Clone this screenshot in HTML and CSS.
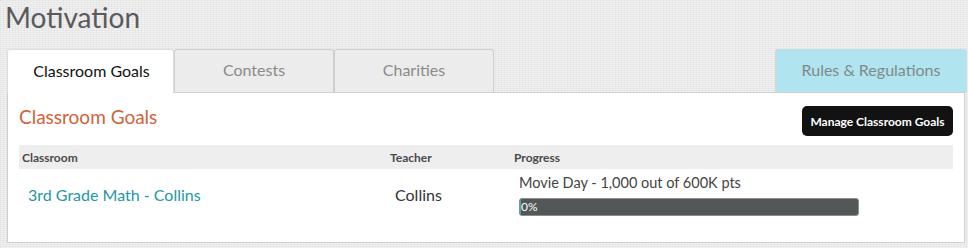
FILE: index.html
```html
<!DOCTYPE html>
<html>
<head>
<meta charset="utf-8">
<link rel="stylesheet" href="styles.css">
</head>
<body>
<div class="page">
  <h1 class="title">Motivation</h1>
  <div class="tabs">
    <div class="tab active">Classroom Goals</div>
    <div class="tab">Contests</div>
    <div class="tab">Charities</div>
    <div class="spacer"></div>
    <div class="tab rules">Rules &amp; Regulations</div>
  </div>
  <div class="panel">
    <div class="panel-head">
      <h2 class="panel-title">Classroom Goals</h2>
      <button class="btn">Manage Classroom Goals</button>
    </div>
    <div class="table">
      <div class="thead">
        <div class="c1">Classroom</div>
        <div class="c2">Teacher</div>
        <div class="c3">Progress</div>
      </div>
      <div class="row">
        <div class="c1 link">3rd Grade Math - Collins</div>
        <div class="c2 teacher">Collins</div>
        <div class="c3 prog">
          <div class="goal">Movie Day - 1,000 out of 600K pts</div>
          <div class="bar"><span class="pct">0%</span></div>
        </div>
      </div>
    </div>
  </div>
</div>
</body>
</html>
```
FILE: styles.css
```css
* { box-sizing: border-box; }
html, body { margin: 0; padding: 0; }
body {
  width: 968px;
  height: 248px;
  overflow: hidden;
  font-family: "Lato", "Open Sans", sans-serif;
  background-color: #e9e9e9;
  background-image:
    repeating-linear-gradient(0deg, rgba(255,255,255,0.35) 0 1px, transparent 1px 2px),
    repeating-linear-gradient(90deg, rgba(0,0,0,0.03) 0 1px, transparent 1px 3px);
}
.page {
  padding: 0 3px 0 7px;
}
.title {
  margin: 0;
  height: 49px;
  padding-top: 0;
  font-size: 28px;
  font-weight: 400;
  color: #5a5a5a;
  line-height: 34px;
  margin-left: -2px;
}
.tabs {
  display: flex;
  height: 43px;
  align-items: stretch;
}
.tab {
  width: 160px;
  border: 1px solid #cfcfcf;
  border-bottom: none;
  border-radius: 3px 3px 0 0;
  background: #ececec;
  color: #8a8a8a;
  font-size: 16px;
  display: flex;
  align-items: center;
  justify-content: center;
  padding-bottom: 3px;
}
.tab.active {
  width: 167px;
  background: #fff;
  color: #111;
  border-color: #dedede;
  position: relative;
  z-index: 1;
  margin-bottom: -1px;
  padding-left: 2px;
}
.spacer { flex: 1; }
.rules {
  width: 192px;
  background: #b0e4ee;
  color: #7f8a8c;
  border-color: #c9dde0;
  margin-right: -2px;
}
.panel {
  background: #fff;
  border: 1px solid #cfcfcf;
  height: 151px;
  padding: 12px 11px 0 11px;
}
.panel-head {
  display: flex;
  justify-content: space-between;
  align-items: flex-start;
  height: 40px;
}
.panel-title {
  margin: 0;
  font-size: 19px;
  font-weight: 400;
  color: #d2623c;
  line-height: 23px;
}
.btn {
  margin-top: 1px;
  background: #121212;
  color: #fff;
  border: none;
  border-radius: 5px;
  height: 30px;
  width: 151px;
  font-family: inherit;
  font-size: 12px;
  font-weight: 700;
  padding: 0;
}
.table { width: 934px; }
.thead {
  display: flex;
  background: #eeeeee;
  height: 24px;
  align-items: center;
  font-size: 12px;
  font-weight: 700;
  color: #4a4a4a;
}
.c1 { width: 371px; padding-left: 3px; }
.c2 { width: 124px; }
.c3 { flex: 1; }
.row {
  display: flex;
  align-items: center;
  height: 52px;
}
.link { color: #2596a6; font-size: 16px; padding-left: 9px; padding-bottom: 2px; }
.teacher { color: #333; font-size: 16px; padding-left: 5px; padding-bottom: 2px; }
.prog { padding-left: 5px; padding-top: 0; }
.goal { font-size: 14.5px; color: #444; line-height: 17px; margin-bottom: 7px; }
.bar {
  width: 340px;
  height: 18px;
  background: #535757;
  border: 1px solid #8a8e8e;
  border-radius: 3px;
  display: flex;
  align-items: center;
}
.pct { color: #fff; font-size: 12px; border-left: 1px solid #3aa7c0; line-height: 14px; }
```
